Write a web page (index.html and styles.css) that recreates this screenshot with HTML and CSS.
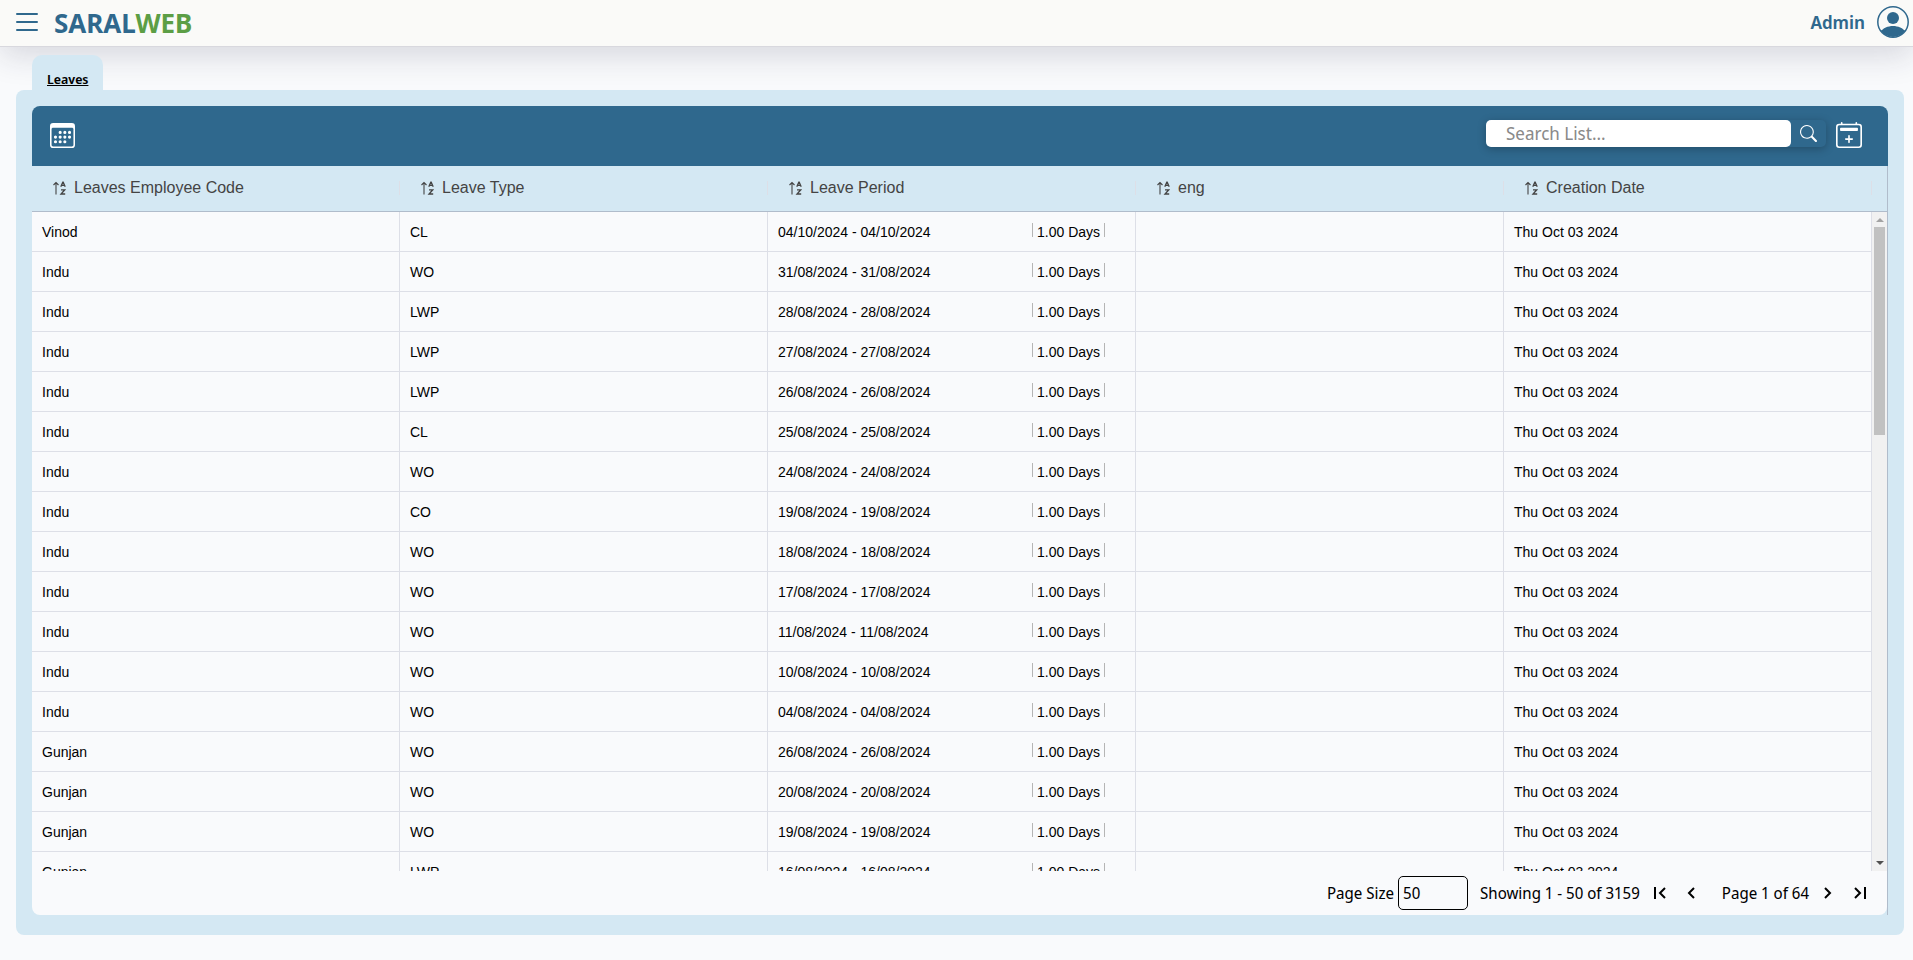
FILE: index.html
```
<!DOCTYPE html>
<html lang="en">
<head>
    <meta charset="UTF-8">
    <meta name="viewport" content="width=device-width, initial-scale=1.0">
    <title>Leaves - SaralWeb</title>
    <link rel="stylesheet" href="styles.css">
</head>
<body>
    <header class="navbar">
        <button class="icon-btn menu-btn" aria-label="Menu">
            <svg width="22" height="18" viewBox="0 0 22 18" stroke="currentColor" stroke-width="2" stroke-linecap="round"><path d="M1 1h20M1 9h20M1 17h20"/></svg>
        </button>
        <a href="#" class="brand">SARAL<span>WEB</span></a>
        <button class="icon-btn user-btn">
            Admin
            <svg width="32" height="32" viewBox="0 0 32 32">
                <clipPath id="avatar-clip"><circle cx="16" cy="16" r="15"/></clipPath>
                <circle cx="16" cy="16" r="15.2" fill="none" stroke="currentColor" stroke-width="1.5"/>
                <circle cx="16" cy="12" r="6" fill="currentColor"/>
                <path d="M3 26c3-4 8-6 13-6s10 2 13 6v6H3z" fill="currentColor" clip-path="url(#avatar-clip)"/>
            </svg>
        </button>
    </header>

    <main class="page">
        <nav class="tabs">
            <a href="#" class="tab">Leaves</a>
        </nav>
        <section class="panel">
            <div class="toolbar">
                <button class="icon-btn" aria-label="Calendar">
                    <svg width="25" height="25" viewBox="0 0 16 16" fill="currentColor">
                        <path d="M14 0H2a2 2 0 0 0-2 2v12a2 2 0 0 0 2 2h12a2 2 0 0 0 2-2V2a2 2 0 0 0-2-2zM1 3.857C1 3.384 1.448 3 2 3h12c.552 0 1 .384 1 .857v10.286c0 .473-.448.857-1 .857H2c-.552 0-1-.384-1-.857V3.857z"/>
                        <path d="M6.500 7a1 1 0 1 0 0-2 1 1 0 0 0 0 2zm3 0a1 1 0 1 0 0-2 1 1 0 0 0 0 2zm3 0a1 1 0 1 0 0-2 1 1 0 0 0 0 2zm-9 3a1 1 0 1 0 0-2 1 1 0 0 0 0 2zm3 0a1 1 0 1 0 0-2 1 1 0 0 0 0 2zm3 0a1 1 0 1 0 0-2 1 1 0 0 0 0 2zm3 0a1 1 0 1 0 0-2 1 1 0 0 0 0 2zm-9 3a1 1 0 1 0 0-2 1 1 0 0 0 0 2zm3 0a1 1 0 1 0 0-2 1 1 0 0 0 0 2zm3 0a1 1 0 1 0 0-2 1 1 0 0 0 0 2z"/>
                    </svg>
                </button>
                <form class="search">
                    <input type="text" class="search-input" placeholder="Search List..." aria-label="Search list">
                    <button type="button" class="icon-btn search-btn" aria-label="Search">
                        <svg width="17" height="17" viewBox="0 0 16 16" fill="currentColor"><path d="M11.742 10.344a6.500 6.500 0 1 0-1.397 1.398h-.001c.03.04.062.078.098.115l3.850 3.850a1 1 0 0 0 1.415-1.414l-3.850-3.850a1.007 1.007 0 0 0-.115-.1zM12 6.500a5.500 5.500 0 1 1-11 0 5.500 5.500 0 0 1 11 0z"/></svg>
                    </button>
                </form>
                <button class="icon-btn" aria-label="Add leave">
                    <svg width="26" height="26" viewBox="0 0 16 16" fill="currentColor">
                        <path d="M3.500 0a.5.5 0 0 1 .5.5V1h8V.5a.5.5 0 0 1 1 0V1h1a2 2 0 0 1 2 2v11a2 2 0 0 1-2 2H2a2 2 0 0 1-2-2V3a2 2 0 0 1 2-2h1V.5a.5.5 0 0 1 .5-.5zM2 2a1 1 0 0 0-1 1v11a1 1 0 0 0 1 1h12a1 1 0 0 0 1-1V3a1 1 0 0 0-1-1H2z"/>
                        <path d="M2.500 4a.5.5 0 0 1 .5-.5h10a.5.5 0 0 1 .5.5v1a.5.5 0 0 1-.5.5H3a.5.5 0 0 1-.5-.5V4zM8 8a.5.5 0 0 1 .5.5V10H10a.5.5 0 0 1 0 1H8.500v1.500a.5.5 0 0 1-1 0V11H6a.5.5 0 0 1 0-1h1.500V8.500A.5.5 0 0 1 8 8z"/>
                    </svg>
                </button>
            </div>

            <div class="grid">
                <div class="grid-body">
                    <table class="leaves">
                        <thead>
                            <tr>
                                <th><span class="head"><svg class="sort"><use href="#sort-icon"/></svg>Leaves Employee Code</span></th>
                                <th><span class="head"><svg class="sort"><use href="#sort-icon"/></svg>Leave Type</span></th>
                                <th><span class="head"><svg class="sort"><use href="#sort-icon"/></svg>Leave Period</span></th>
                                <th><span class="head"><svg class="sort"><use href="#sort-icon"/></svg>eng</span></th>
                                <th><span class="head"><svg class="sort"><use href="#sort-icon"/></svg>Creation Date</span></th>
                            </tr>
                        </thead>
                        <tbody id="leave-rows"></tbody>
                    </table>
                    <div class="scroll" aria-hidden="true">
                        <div class="scroll-head"></div>
                        <svg class="scroll-arrow" viewBox="0 0 15 15"><path d="M4 10l4-4 4 4z" fill="#a3a3a3"/></svg>
                        <div class="scroll-track"><div class="scroll-thumb"></div></div>
                        <svg class="scroll-arrow" viewBox="0 0 15 15"><path d="M4 5h8l-4 4z" fill="#505050"/></svg>
                    </div>
                </div>
                <footer class="pager">
                    <label for="page-size">Page Size</label>
                    <input type="text" id="page-size" class="page-size" value="50">
                    <span class="showing">Showing 1 - 50 of 3159</span>
                    <button class="icon-btn page-btn" aria-label="First page"><svg width="12" height="14" viewBox="0 0 12 14"><path d="M1 1v12M11 2L6 7l5 5"/></svg></button>
                    <button class="icon-btn page-btn" aria-label="Previous page"><svg width="12" height="14" viewBox="0 0 12 14"><path d="M8 2L3 7l5 5"/></svg></button>
                    <span class="page-no">Page 1 of 64</span>
                    <button class="icon-btn page-btn" aria-label="Next page"><svg width="12" height="14" viewBox="0 0 12 14"><path d="M3 2l5 5-5 5"/></svg></button>
                    <button class="icon-btn page-btn" aria-label="Last page"><svg width="12" height="14" viewBox="0 0 12 14"><path d="M1 2l5 5-5 5M11 1v12"/></svg></button>
                </footer>
            </div>
        </section>
    </main>

    <svg class="sprite" aria-hidden="true">
        <symbol id="sort-icon" viewBox="0 0 13 14">
            <path d="M3 13.500V1.500M.5 4L3 1.500 5.500 4" fill="none" stroke="#444" stroke-width="1.100"/>
            <path d="M7.800 5.800l2-4.600h.4l2 4.600M8.500 4.300h3M8 8.800h3.800l-3.800 4.200h4.200" fill="none" stroke="#444" stroke-width="1.300"/>
        </symbol>
    </svg>

    <script>
        // employee, leave type, leave date
        const leaves = [
            ['Vinod', 'CL', '04/10/2024'],
            ['Indu', 'WO', '31/08/2024'],
            ['Indu', 'LWP', '28/08/2024'],
            ['Indu', 'LWP', '27/08/2024'],
            ['Indu', 'LWP', '26/08/2024'],
            ['Indu', 'CL', '25/08/2024'],
            ['Indu', 'WO', '24/08/2024'],
            ['Indu', 'CO', '19/08/2024'],
            ['Indu', 'WO', '18/08/2024'],
            ['Indu', 'WO', '17/08/2024'],
            ['Indu', 'WO', '11/08/2024'],
            ['Indu', 'WO', '10/08/2024'],
            ['Indu', 'WO', '04/08/2024'],
            ['Gunjan', 'WO', '26/08/2024'],
            ['Gunjan', 'WO', '20/08/2024'],
            ['Gunjan', 'WO', '19/08/2024'],
            ['Gunjan', 'LWP', '16/08/2024']
        ];

        document.getElementById('leave-rows').innerHTML = leaves.map(([name, type, date]) => `
            <tr>
                <td>${name}</td>
                <td>${type}</td>
                <td><div class="period"><span>${date} - ${date}</span><span><i class="bar"></i> 1.00 Days <i class="bar"></i></span></div></td>
                <td></td>
                <td>Thu Oct 03 2024</td>
            </tr>`).join('');
    </script>
</body>
</html>
```
FILE: styles.css
```
:root {
    --primary: #2f688d;
    --accent: #5c9e45;
    --panel: #d4e8f3;
    --background: #f9fafc;
    --line: #dddfe7;
    --line-dark: #b0bccb;
}
* { box-sizing: border-box; }
body {
    margin: 0; height: 100vh; display: flex; flex-direction: column;
    font-family: 'Noto Sans Display', 'Noto Sans', sans-serif; font-size: 16px; background-color: var(--background); color: #000;
}
.icon-btn { display: flex; align-items: center; padding: 0; border: none; background: none; color: inherit; font: inherit; cursor: pointer; }

.navbar {
    display: flex; align-items: center; height: 47px; padding: 0 4px 2px 16px; flex: none;
    background-color: #fafaf8; border-bottom: 1px solid #d8d8de; box-shadow: 0 8px 32px rgba(30, 30, 60, 0.16);
    color: var(--primary);
}
.brand { margin-left: 16px; padding-top: 2px; font-family: 'Noto Sans', sans-serif; font-size: 26px; font-weight: 700; line-height: 32px; color: var(--primary); text-decoration: none; }
.brand span { color: var(--accent); }
.user-btn { margin-left: auto; gap: 12px; font-size: 18px; font-weight: 600; }

.page { flex: 1; min-height: 0; display: flex; flex-direction: column; padding: 8px 9px 25px 16px; }
.tabs { display: flex; padding-left: 16px; }
.tab {
    position: relative; padding: 16px 15px 2px; line-height: 17px; border-radius: 10px 10px 0 0;
    background-color: var(--panel); color: #000; font-size: 13px; font-weight: 600;
}
.panel { flex: 1; min-height: 0; display: flex; flex-direction: column; padding: 16px 16px 20px; border-radius: 8px; background-color: var(--panel); }

.toolbar { display: flex; align-items: center; gap: 10px; height: 60px; padding: 0 26px 2px 18px; flex: none; border-radius: 8px 8px 0 0; background-color: var(--primary); color: #fff; }
.search { display: flex; margin-left: auto; margin-bottom: 4px; border-radius: 5px; box-shadow: 0 2px 8px rgba(0, 0, 0, 0.25); }
.search-input { width: 305px; height: 27px; padding: 0 20px; border: none; border-radius: 5px; font: inherit; font-size: 18px; }
.search-input::placeholder { color: #8a8a8a; }
.search-btn { width: 35px; justify-content: center; }

.grid { flex: 1; min-height: 0; display: flex; flex-direction: column; border-right: 1px solid var(--line-dark); }
.grid-body { flex: 1; min-height: 0; display: flex; background-color: var(--background); }
.leaves { flex: 1; min-width: 0; display: flex; flex-direction: column; font-family: 'Liberation Sans', Arial, sans-serif; font-size: 14px; }
.leaves tr { display: table; table-layout: fixed; width: 100%; border-spacing: 0; }
.leaves thead { display: block; flex: none; background-color: var(--panel); border-bottom: 1px solid var(--line-dark); }
.leaves tbody { display: block; flex: 1; min-height: 0; overflow: hidden; }
.leaves th { height: 45px; padding: 0 0 2px; font-size: 16px; font-weight: 400; color: #444; text-align: left; }
.head { display: flex; align-items: center; height: 14px; padding-left: 21px; border-right: 1px solid var(--line); }
.sort { width: 13px; height: 14px; margin-right: 8px; }
.leaves td { height: 40px; padding: 0 10px; border-right: 1px solid var(--line); border-bottom: 1px solid var(--line); }
.period { display: flex; align-items: baseline; justify-content: space-between; padding-right: 20px; }
.bar { display: inline-block; width: 1px; height: 14px; background-color: #b5b5b5; }
.sprite { display: none; }

.scroll { display: flex; flex-direction: column; width: 15px; flex: none; background-color: #f1f1f1; }
.scroll-head { height: 46px; background-color: var(--panel); border-bottom: 1px solid var(--line-dark); }
.scroll-arrow { width: 15px; height: 15px; }
.scroll-track { flex: 1; padding: 0 2px; }
.scroll-thumb { height: 33%; background-color: #c1c1c1; }

.pager { display: flex; align-items: center; justify-content: flex-end; height: 44px; padding-right: 11px; flex: none; border-radius: 0 0 8px 8px; background-color: var(--background); }
.page-size { width: 70px; height: 34px; margin: 0 12px 0 4px; padding: 0 4px; border: 1px solid #000; border-radius: 5px; background: none; font: inherit; }
.showing { margin-right: 4px; }
.page-btn { width: 32px; height: 24px; justify-content: center; }
.page-btn svg { fill: none; stroke: #000; stroke-width: 2; }
.page-no { margin: 0 3px 0 14px; }
```
